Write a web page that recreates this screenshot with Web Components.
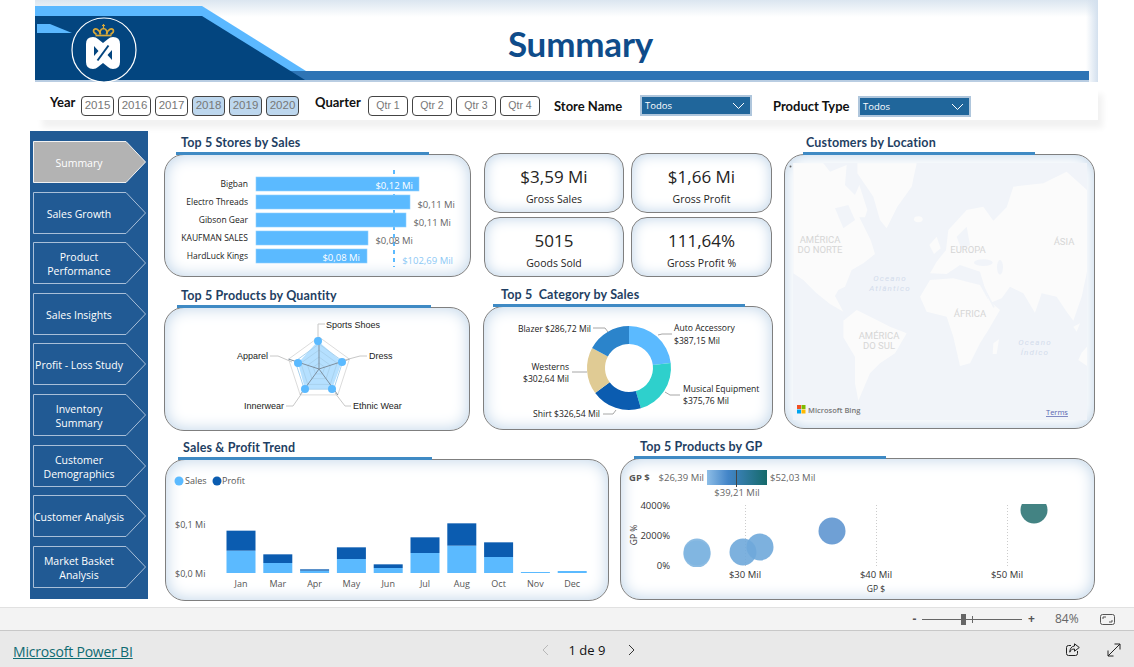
<!DOCTYPE html>
<html lang="en">
<head>
<meta charset="utf-8">
<title>Summary</title>
<style>
  html, body { margin: 0; padding: 0; background: #fff; }
  body { width: 1134px; height: 667px; overflow: hidden; font-family: "Open Sans", "Liberation Sans", sans-serif; }
</style>
</head>
<body>
<report-page></report-page>
<script>
const TITLE_FONT = `Lato, "Open Sans", sans-serif`;
const UI_FONT = `"Open Sans", "Liberation Sans", sans-serif`;
const ARIAL = `"Liberation Sans", Arial, sans-serif`;

class ReportHeader extends HTMLElement {
  constructor() {
    super();
    this.attachShadow({ mode: 'open' });
  }
  connectedCallback() {
    this.shadowRoot.innerHTML = `
      <style>
        :host { display: flex; position: relative; width: 1063px; height: 82px; margin-left: 35px; align-items: center; justify-content: center;
          box-sizing: border-box; padding: 4px 0 0 28px;
          background: linear-gradient(to bottom, #dbe6f0 0, #fff 17px); overflow: hidden; }
        .edge { position: absolute; top: 0; right: 0; bottom: 0; width: 12px; background: linear-gradient(to left, #d3e0ee, rgba(255,255,255,0)); }
        svg { position: absolute; left: 0; top: 0; }
        h1 { position: relative; margin: 0; font: 700 35px/40px ${TITLE_FONT}; color: #0f4c8a; letter-spacing: -.2px; }
      </style>
      <div class="edge"></div>
      <svg width="1063" height="82" viewBox="35 0 1063 82">
        <rect x="35" y="80" width="1054" height="2" fill="#b9cde2"/>
        <polygon points="35,6 202,6 306,71 320,80 35,80" fill="#5bb8ff"/>
        <rect x="290" y="71" width="799" height="9" fill="#2e74b5"/>
        <polygon points="35,16 202,16 305,80 35,80" fill="#03457f"/>
        <polygon points="37,24 50,24 72,33 37,33" fill="#5bb8ff"/>
        <circle cx="104" cy="50" r="32" fill="#03457f" stroke="#fff" stroke-width="1.2"/>
        <g fill="none" stroke="#d9a93a" stroke-width="1.7">
          <path d="M95.500 35.500h16"/>
          <path d="M96.500 34.500c-1-1.200-3-1.600-3-3.500 0-1.800 2-2.600 3.600-1.800 1.500.8 2.900 2.600 3.400 5"/>
          <path d="M110.500 34.500c1-1.200 3-1.600 3-3.500 0-1.800-2-2.600-3.600-1.800-1.500.8-2.900 2.600-3.400 5"/>
          <path d="M100.500 34.500c-.8-2-.8-5.500 3-6 3.800.5 3.800 4 3 6"/>
          <path d="M103.500 28v-4M102 25.500h3" stroke-width="1.200"/>
        </g>
        <path d="M93 37q3 0 5 2l5 4 5-4q2-2 5-2 7 0 7 7v18q0 7-7 7-3 0-5-2l-5-4-5 4q-2 2-5 2-7 0-7-7V44q0-7 7-7z" fill="#fff"/>
        <path d="M94 46l4.500 5L94 56zM112 60l-4.500-5 4.500-5z" fill="#03457f"/>
        <path d="M97.500 60.500L108.500 45.500" stroke="#03457f" stroke-width="2" fill="none"/>
      </svg>
      <h1><slot></slot></h1>
    `;
  }
}

class SlicerButton extends HTMLElement {
  constructor() {
    super();
    this.attachShadow({ mode: 'open' });
  }
  connectedCallback() {
    const on = this.hasAttribute('selected');
    this.shadowRoot.innerHTML = `
      <style>
        :host { display: flex; box-sizing: border-box; height: 20px; width: var(--w, 33px); align-items: center; justify-content: center;
          border: 1px solid #444; border-radius: 4px; font: var(--fs, 11.500px)/1 ${ARIAL}; color: #777; background: ${on ? '#bdd7ee' : '#fff'}; }
      </style>
      <slot></slot>
    `;
  }
}

class SlicerDropdown extends HTMLElement {
  constructor() {
    super();
    this.attachShadow({ mode: 'open' });
  }
  connectedCallback() {
    this.shadowRoot.innerHTML = `
      <style>
        :host { display: flex; box-sizing: border-box; height: 21px; align-items: center; justify-content: space-between; padding: 1px 5px 0 3px;
          background: #20669b; border: 2px solid #afc6dc; color: #fff; font: 9.500px/1 ${UI_FONT}; }
        svg { display: block; }
      </style>
      <slot></slot>
      <svg width="13" height="8" viewBox="0 0 13 8"><path d="M1 1l5.500 5.500L12 1" fill="none" stroke="#fff" stroke-width="1"/></svg>
    `;
  }
}

class SlicerBar extends HTMLElement {
  constructor() {
    super();
    this.attachShadow({ mode: 'open' });
  }
  connectedCallback() {
    const years = [2015, 2016, 2017, 2018, 2019, 2020];
    const selected = [2018, 2019, 2020];
    const qtrs = ['Qtr 1', 'Qtr 2', 'Qtr 3', 'Qtr 4'];
    this.shadowRoot.innerHTML = `
      <style>
        :host { display: flex; box-sizing: border-box; width: 1063px; height: 36px; margin: 2px 0 11px 35px; padding: 11px 0 4px 15px;
          background: #fff; box-shadow: 6px 9px 6px -1px #f2f2f2; align-items: center; }
        .lbl { font: 700 13px/16px ${TITLE_FONT}; color: #111; white-space: nowrap; }
        .up { margin-bottom: 7px; }
        .group { display: flex; gap: 4px; }
      </style>
      <span class="lbl up" style="width:31px">Year</span>
      <div class="group">
        ${years.map(y => `<slicer-button ${selected.includes(y) ? 'selected' : ''}>${y}</slicer-button>`).join('')}
      </div>
      <span class="lbl up" style="width:53px;margin-left:16px">Quarter</span>
      <div class="group" style="--w:40px;--fs:10.500px">
        ${qtrs.map(q => `<slicer-button>${q}</slicer-button>`).join('')}
      </div>
      <span class="lbl" style="width:86px;margin-left:14px">Store Name</span>
      <slicer-dropdown style="width:112px">Todos</slicer-dropdown>
      <span class="lbl" style="width:85px;margin-left:21px">Product Type</span>
      <slicer-dropdown style="width:113px;margin-top:1px">Todos</slicer-dropdown>
    `;
  }
}

class NavArrow extends HTMLElement {
  constructor() {
    super();
    this.attachShadow({ mode: 'open' });
  }
  connectedCallback() {
    const on = this.hasAttribute('active');
    this.shadowRoot.innerHTML = `
      <style>
        :host { display: flex; position: relative; box-sizing: border-box; width: 113px; height: 42px; padding: 2px 21px 0 0; align-items: center; justify-content: center;
          color: #fff; font: 10.500px/14px ${UI_FONT}; text-align: center; white-space: nowrap; }
        svg { position: absolute; left: 0; top: 0; }
        span { position: relative; }
      </style>
      <svg width="113" height="42" viewBox="0 0 113 42">
        <polygon points="0.500,0.500 93,0.500 112.500,21 93,41.500 0.500,41.500" fill="${on ? '#b3b3b3' : 'none'}" stroke="${on ? '#f2f2f2' : '#a9bfd8'}"/>
      </svg>
      <span><slot></slot></span>
    `;
  }
}

class SideNav extends HTMLElement {
  constructor() {
    super();
    this.attachShadow({ mode: 'open' });
  }
  connectedCallback() {
    const items = ['Summary', 'Sales Growth', 'Product<br>Performance', 'Sales Insights', 'Profit - Loss Study',
      'Inventory<br>Summary', 'Customer<br>Demographics', 'Customer Analysis', 'Market Basket<br>Analysis'];
    this.shadowRoot.innerHTML = `
      <style>
        :host { display: flex; flex-direction: column; box-sizing: border-box; width: 118px; height: 468px; margin-left: 30px; padding: 10px 0 0 3px; gap: 8.620px; background: #215a94; flex: none; }
      </style>
      ${items.map((t, i) => `<nav-arrow ${i === 0 ? 'active' : ''}>${t}</nav-arrow>`).join('')}
    `;
  }
}

class ChartPanel extends HTMLElement {
  constructor() {
    super();
    this.attachShadow({ mode: 'open' });
  }
  connectedCallback() {
    this.shadowRoot.innerHTML = `
      <style>
        :host { display: block; width: var(--w); flex: none; }
        .head { position: relative; z-index: 1; box-sizing: border-box; height: 21px; margin: 0 0 -1px var(--rule-x); width: var(--rule-w); padding-left: var(--title-x);
          border-bottom: 3px solid #3f8ac4; font: 700 12.500px/17px ${TITLE_FONT}; color: #1f3f63; letter-spacing: .15px; white-space: pre; }
        .card { box-sizing: border-box; height: var(--h); border: 1px solid #7f7f7f; border-radius: 20px; background: #fff; box-shadow: inset 0 0 16px #bcd2e7; overflow: hidden; }
      </style>
      <div class="head">${this.getAttribute('heading')}</div>
      <div class="card"><slot></slot></div>
    `;
  }
}

class KpiCard extends HTMLElement {
  constructor() {
    super();
    this.attachShadow({ mode: 'open' });
  }
  connectedCallback() {
    this.shadowRoot.innerHTML = `
      <style>
        :host { display: flex; flex-direction: column; align-items: center; box-sizing: border-box; padding-top: 11px; gap: 3px;
          border: 1px solid #7f7f7f; border-radius: 16px; background: #fff; box-shadow: inset 0 0 14px #bcd2e7; color: #252423; }
        .v { font: 17px/24px ${UI_FONT}; }
        .l { font: 10.500px/14px ${UI_FONT}; }
      </style>
      <div class="v">${this.getAttribute('value')}</div>
      <div class="l"><slot></slot></div>
    `;
  }
}

class StoresChart extends HTMLElement {
  constructor() {
    super();
    this.attachShadow({ mode: 'open' });
  }
  connectedCallback() {
    const rows = [
      ['Bigban', 419, '$0,12 Mi', 413, 189, true],
      ['Electro Threads', 410, '$0,11 Mi', 455, 208, false],
      ['Gibson Gear', 406, '$0,11 Mi', 451, 226, false],
      ['KAUFMAN SALES', 368, '$0,08 Mi', 413, 244, false],
      ['HardLuck Kings', 367, '$0,08 Mi', 360, 261, true]
    ];
    this.shadowRoot.innerHTML = `
      <style>
        :host { display: block; height: 100%; }
        svg { display: block; font: 9.500px ${UI_FONT}; }
      </style>
      <svg width="305" height="121" viewBox="165 155 305 121">
        <line x1="394" y1="170" x2="394" y2="267" stroke="#5bbaff" stroke-width="2" stroke-dasharray="4 4"/>
        ${rows.map((r, i) => {
          const y = 177 + i * 18;
          return `
            <text x="248" y="${y + 10}" text-anchor="end" font-size="8.500" fill="#222">${r[0]}</text>
            <rect x="256" y="${y}" width="${r[1] - 256}" height="14" fill="#5bbaff" stroke="#8fd0ff" stroke-width=".6"/>
            <text x="${r[3]}" y="${r[4]}" text-anchor="end" font-size="9.500" fill="${r[5] ? '#fff' : '#666'}">${r[2]}</text>`;
        }).join('')}
        <text x="453" y="264" text-anchor="end" font-size="9.500" fill="#8cc8f5">$102,69 Mil</text>
      </svg>
    `;
  }
}

class RadarChart extends HTMLElement {
  constructor() {
    super();
    this.attachShadow({ mode: 'open' });
  }
  connectedCallback() {
    const cx = 319, cy = 369;
    const ring = r => [0, 1, 2, 3, 4].map(i => {
      const a = -Math.PI / 2 + i * 2 * Math.PI / 5;
      return `${(cx + r * Math.cos(a)).toFixed(1)},${(cy + r * Math.sin(a)).toFixed(1)}`;
    });
    const outer = ring(32);
    const data = [[318, 341], [342, 362], [332, 389], [305, 389], [298, 363]];
    this.shadowRoot.innerHTML = `
      <style>
        :host { display: block; height: 100%; }
        svg { display: block; font: 9px ${ARIAL}; }
      </style>
      <svg width="304" height="122" viewBox="165 308 304 122">
        <polygon points="${data.map(p => p.join(',')).join(' ')}" fill="#5bbaff" fill-opacity=".45"/>
        ${[32, 25, 19, 12, 6].map((r, i) => `<polygon points="${ring(r).join(' ')}" fill="none" stroke="${i ? '#a9d2ee' : '#dcdcdc'}" stroke-width="1"/>`).join('')}
        ${outer.map(p => `<path d="M${cx} ${cy}L${p}" stroke="#7e8f9e" stroke-width="1"/>`).join('')}
        ${data.map(p => `<circle cx="${p[0]}" cy="${p[1]}" r="4" fill="#5bbaff"/>`).join('')}
        <g fill="none" stroke="#c8c8c8" stroke-width="1">
          <path d="M318 337V324H325"/>
          <path d="M345 360L360 356H367"/>
          <path d="M335 393L345 406H351"/>
          <path d="M302 393L293 406H286"/>
          <path d="M292 362L278 356H270"/>
        </g>
        <g fill="#222">
          <text x="326" y="328">Sports Shoes</text>
          <text x="369" y="359">Dress</text>
          <text x="353" y="409">Ethnic Wear</text>
          <text x="284" y="409" text-anchor="end">Innerwear</text>
          <text x="268" y="359" text-anchor="end">Apparel</text>
        </g>
      </svg>
    `;
  }
}

class DonutChart extends HTMLElement {
  constructor() {
    super();
    this.attachShadow({ mode: 'open' });
  }
  connectedCallback() {
    const cx = 629, cy = 368, R = 42, r = 24;
    const slices = [[387.15, '#5bbaff'], [375.76, '#2ed0cc'], [326.54, '#0b5cb0'], [302.64, '#e0cb94'], [286.72, '#2b84cb']];
    const total = slices.reduce((s, x) => s + x[0], 0);
    const pt = (rad, deg) => {
      const a = (deg - 90) * Math.PI / 180;
      return `${(cx + rad * Math.cos(a)).toFixed(2)} ${(cy + rad * Math.sin(a)).toFixed(2)}`;
    };
    let at = 0;
    const arcs = slices.map(([v, c]) => {
      const from = at, to = at + v / total * 360;
      at = to;
      return `<path d="M${pt(R, from)}A${R} ${R} 0 0 1 ${pt(R, to)}L${pt(r, to)}A${r} ${r} 0 0 0 ${pt(r, from)}Z" fill="${c}"/>`;
    }).join('');
    this.shadowRoot.innerHTML = `
      <style>
        :host { display: block; height: 100%; }
        svg { display: block; font: 8.600px ${UI_FONT}; }
      </style>
      <svg width="288" height="122" viewBox="484 307 288 122">
        ${arcs}
        <g fill="none" stroke="#a6a6a6" stroke-width="1">
          <path d="M658 335L662 334H672"/>
          <path d="M593 328H605L608 332"/>
          <path d="M572 372H587"/>
          <path d="M665 392L670 395H680"/>
          <path d="M603 414H613L616 410"/>
        </g>
        <g fill="#222">
          <text x="674" y="331">Auto Accessory</text>
          <text x="674" y="344">$387,15 Mil</text>
          <text x="683" y="392">Musical Equipment</text>
          <text x="683" y="404">$375,76 Mil</text>
          <text x="591" y="332" text-anchor="end">Blazer $286,72 Mil</text>
          <text x="569" y="370" text-anchor="end">Westerns</text>
          <text x="569" y="382" text-anchor="end">$302,64 Mil</text>
          <text x="600" y="417" text-anchor="end">Shirt $326,54 Mil</text>
        </g>
      </svg>
    `;
  }
}

class WorldMap extends HTMLElement {
  constructor() {
    super();
    this.attachShadow({ mode: 'open' });
  }
  connectedCallback() {
    const sea = '#f1f4f9';
    // zoomed-in map coordinates, scaled down by the group below
    const land = [
      '40,100 130,100 150,125 200,105 195,165 225,195 238,165 262,240 255,262 238,262 272,330 285,372 250,400 215,420 195,470 175,480 165,498 190,545 150,522 110,490 70,450 40,430',
      '232,100 410,100 395,170 352,230 320,295 300,270 280,200 232,130',
      '190,572 230,540 290,570 330,590 380,610 345,670 300,700 270,730 235,812 225,760 225,680 190,622',
      '420,500 450,450 520,445 600,465 625,510 660,540 625,600 600,640 570,700 540,708 520,620 500,560 440,545',
      '640,640 657,628 650,672 638,672',
      '450,430 470,395 498,360 505,300 560,240 610,230 640,272 680,232 700,170 790,160 860,125 921,180 921,425 905,500 880,572 860,545 830,500 785,490 765,548 730,490 690,470 665,505 628,520 600,425 540,405 500,432',
      '448,345 470,320 482,355 462,372',
      '880,590 900,580 890,605',
      '905,668 921,650 921,708 895,690'
    ];
    const txt = (s, x, y) => `<text x="${x}" y="${y}">${s}</text>`;
    this.shadowRoot.innerHTML = `
      <style>
        :host { display: block; height: 100%; }
        svg { display: block; }
        .place { font: 9.500px Roboto, sans-serif; fill: #d6d6d6; text-anchor: middle; }
        .sea { font: italic 8px Roboto, sans-serif; fill: #d3dcec; text-anchor: middle; letter-spacing: 1.200px; }
      </style>
      <svg width="309" height="273" viewBox="785 155 309 273">
        <rect x="793" y="163" width="294" height="257" fill="${sea}"/>
        <g transform="translate(780 130) scale(.33333)">
          <g fill="#fbfbfb">
            ${land.map(p => `<polygon points="${p}"/>`).join('')}
            <ellipse cx="415" cy="268" rx="13" ry="9"/>
          </g>
          <g fill="${sea}">
            <polygon points="165,235 205,225 225,270 190,295"/>
            <polygon points="530,320 560,290 570,345 545,360"/>
            <ellipse cx="610" cy="398" rx="28" ry="10"/>
            <ellipse cx="660" cy="412" rx="9" ry="22"/>
          </g>
          <path d="M602 455L642 532" stroke="${sea}" stroke-width="5"/>
        </g>
        <circle cx="790.500" cy="159.500" r="1" fill="#666"/>
        <circle cx="790.500" cy="166.500" r="1" fill="#666"/>
        <g class="place">
          ${txt('AMÉRICA', 820, 243)}${txt('DO NORTE', 820, 253)}${txt('EUROPA', 968, 253)}${txt('ÁSIA', 1064, 245)}
          ${txt('ÁFRICA', 970, 317)}${txt('AMÉRICA', 879, 339)}${txt('DO SUL', 879, 349)}
        </g>
        <g class="sea">
          ${txt('Oceano', 890, 281)}${txt('Atlântico', 890, 291)}${txt('Oceano', 1035, 345)}${txt('Índico', 1035, 355)}
        </g>
        <rect x="797" y="405" width="4" height="4" fill="#f25022"/>
        <rect x="801.500" y="405" width="4" height="4" fill="#7fba00"/>
        <rect x="797" y="409.500" width="4" height="4" fill="#00a4ef"/>
        <rect x="801.500" y="409.500" width="4" height="4" fill="#ffb900"/>
        <text x="808" y="412.500" font-family="${UI_FONT.replace(/"/g, "'")}" font-size="7.500" font-weight="600" fill="#777">Microsoft Bing</text>
        <text x="1046" y="415" font-family="${UI_FONT.replace(/"/g, "'")}" font-size="7.500" fill="#5a66b0" text-decoration="underline">Terms</text>
      </svg>
    `;
  }
}

class TrendChart extends HTMLElement {
  constructor() {
    super();
    this.attachShadow({ mode: 'open' });
  }
  connectedCallback() {
    const months = [['Jan', 347, 287], ['Mar', 384, 358], ['Apr', 407, 403], ['May', 372, 337], ['Jun', 399, 388],
      ['Jul', 354, 307], ['Aug', 332, 265], ['Oct', 366, 322], ['Nov', 411, 411], ['Dec', 408, 408]];
    const base = 573;
    const toY = v => 435 + v / 3;
    this.shadowRoot.innerHTML = `
      <style>
        :host { display: block; height: 100%; }
        svg { display: block; font: 9px ${UI_FONT}; fill: #555; }
      </style>
      <svg width="442" height="140" viewBox="166 460 442 140">
        <circle cx="179" cy="481" r="4.500" fill="#5bbaff"/>
        <text x="185" y="484">Sales</text>
        <circle cx="217" cy="481" r="4.500" fill="#0b5cb0"/>
        <text x="222" y="484">Profit</text>
        <text x="175" y="528">$0,1 Mi</text>
        <text x="175" y="577">$0,0 Mi</text>
        ${months.map(([m, s, p], i) => {
          const x = 241 + i * 36.8;
          return `
            <rect x="${x - 14.500}" y="${toY(s)}" width="29" height="${base - toY(s)}" fill="#5bbaff"/>
            <rect x="${x - 14.500}" y="${toY(p)}" width="29" height="${toY(s) - toY(p)}" fill="#0b5cb0"/>
            <text x="${x}" y="587" text-anchor="middle">${m}</text>`;
        }).join('')}
      </svg>
    `;
  }
}

class BubbleChart extends HTMLElement {
  constructor() {
    super();
    this.attachShadow({ mode: 'open' });
  }
  connectedCallback() {
    const bubbles = [[697, 552, '#7fb5e0'], [697, 554, '#7fb5e0'], [743, 552, '#6fa9da'], [760, 547, '#6fa9da'], [832, 531, '#5f96d0'], [1034, 510, '#2f7575']];
    this.shadowRoot.innerHTML = `
      <style>
        :host { display: block; height: 100%; }
        svg { display: block; font: 9.500px ${UI_FONT}; fill: #333; }
      </style>
      <svg width="473" height="140" viewBox="621 459 473 140">
        <defs>
          <linearGradient id="gp">
            <stop offset="0" stop-color="#8dbde6"/><stop offset=".35" stop-color="#4385c8"/><stop offset="1" stop-color="#156a6a"/>
          </linearGradient>
          <clipPath id="plot"><rect x="680" y="504" width="400" height="63"/></clipPath>
        </defs>
        <text x="629" y="481" font-weight="700" fill="#555">GP $</text>
        <text x="704" y="481" text-anchor="end" fill="#666">$26,39 Mil</text>
        <rect x="707" y="470" width="60" height="15" fill="url(#gp)"/>
        <line x1="736.500" y1="470" x2="736.500" y2="487" stroke="#444"/>
        <text x="770" y="481" fill="#666">$52,03 Mil</text>
        <text x="737" y="496" text-anchor="middle" fill="#666">$39,21 Mil</text>
        ${[745, 876, 1007].map(x => `<line x1="${x}.500" y1="505" x2="${x}.500" y2="566" stroke="#ccc" stroke-dasharray="1 2"/>`).join('')}
        <g clip-path="url(#plot)">
          ${bubbles.map(b => `<circle cx="${b[0]}" cy="${b[1]}" r="13.500" fill="${b[2]}" fill-opacity=".9"/>`).join('')}
        </g>
        <text x="670" y="509" text-anchor="end">4000%</text>
        <text x="670" y="539" text-anchor="end">2000%</text>
        <text x="670" y="569" text-anchor="end">0%</text>
        <text transform="translate(637 535) rotate(-90)" text-anchor="middle" font-size="8.500">GP %</text>
        <text x="745" y="578" text-anchor="middle">$30 Mil</text>
        <text x="876" y="578" text-anchor="middle">$40 Mil</text>
        <text x="1007" y="578" text-anchor="middle">$50 Mil</text>
        <text x="876" y="592" text-anchor="middle" font-size="8.500">GP $</text>
      </svg>
    `;
  }
}

class ZoomBar extends HTMLElement {
  constructor() {
    super();
    this.attachShadow({ mode: 'open' });
  }
  connectedCallback() {
    this.shadowRoot.innerHTML = `
      <style>
        :host { display: flex; box-sizing: border-box; height: 24px; padding-right: 19px; align-items: center; justify-content: flex-end;
          background: #f3f3f3; border-top: 1px solid #e1e1e1; border-bottom: 1px solid #c8c8c8; font: 12px/1 ${UI_FONT}; color: #666; }
        .sign { width: 7px; text-align: center; font-weight: 700; color: #555; }
        .track { position: relative; width: 100px; height: 1px; background: #666; margin: 0 6px 0 4px; }
        .thumb { position: absolute; left: 39px; top: -5px; width: 5px; height: 11px; background: #666; }
        .tick { position: absolute; left: 50px; top: -3px; width: 1px; height: 7px; background: #666; }
        .pct { width: 24px; margin-left: 20px; }
        svg { display: block; margin-left: 21px; }
      </style>
      <span class="sign">-</span>
      <div class="track"><div class="thumb"></div><div class="tick"></div></div>
      <span class="sign">+</span>
      <span class="pct">84%</span>
      <svg width="15" height="11" viewBox="0 0 15 11" fill="none" stroke="#555">
        <rect x=".5" y=".5" width="14" height="10" rx="2"/>
        <path d="M3 5V3h3M12 6v2H9"/>
      </svg>
    `;
  }
}

class ReportFooter extends HTMLElement {
  constructor() {
    super();
    this.attachShadow({ mode: 'open' });
  }
  connectedCallback() {
    this.shadowRoot.innerHTML = `
      <style>
        :host { display: flex; box-sizing: border-box; height: 36px; padding: 2px 0 0 13px; align-items: center; background: #e9e9e9; font: 14px/1 ${UI_FONT}; color: #111; }
        .brand { width: 120px; margin-top: 3px; color: #0e6b72; text-decoration: underline; white-space: nowrap; letter-spacing: -.2px; }
        .pager { display: flex; align-items: center; margin-left: 409px; }
        .num { width: 60px; text-align: center; font-size: 13px; font-weight: 500; }
        .icons { display: flex; gap: 27px; margin-left: auto; padding-right: 13px; }
        svg { display: block; }
      </style>
      <span class="brand">Microsoft Power BI</span>
      <div class="pager">
        <svg width="7" height="12" viewBox="0 0 7 12"><path d="M6 1L1 6l5 5" fill="none" stroke="#b8b8b8"/></svg>
        <span class="num" style="margin:0 11px 0 8px">1 de 9</span>
        <svg width="7" height="12" viewBox="0 0 7 12"><path d="M1 1l5 5-5 5" fill="none" stroke="#333"/></svg>
      </div>
      <div class="icons">
        <svg width="14" height="14" viewBox="0 0 14 14" fill="none" stroke="#222">
          <path d="M5 2.500H2.500a2 2 0 0 0-2 2v6a2 2 0 0 0 2 2h7a2 2 0 0 0 2-2V8"/>
          <path d="M8.500.800L13.300 4.500 8.500 8.200V6C6 6 4.500 7 3.800 9.200 3.800 5.800 5.500 3.200 8.500 3z"/>
        </svg>
        <svg width="14" height="14" viewBox="0 0 14 14" fill="none" stroke="#222">
          <path d="M1 13L13 1M7.500 1H13v5.500M1 7.500V13h5.500"/>
        </svg>
      </div>
    `;
  }
}

class ReportPage extends HTMLElement {
  constructor() {
    super();
    this.attachShadow({ mode: 'open' });
  }
  connectedCallback() {
    this.shadowRoot.innerHTML = `
      <style>
        :host { display: flex; flex-direction: column; width: 1134px; height: 667px; }
        .body { display: flex; height: 476px; flex: none; }
        .main { display: flex; flex-direction: column; margin-left: 16px; padding-top: 2px; }
        .top { display: flex; height: 305px; flex: none; }
        .col { display: flex; flex-direction: column; }
        .kpis { display: grid; grid-template-columns: 140px 141px; grid-auto-rows: 60px; column-gap: 7px; row-gap: 4px; margin-top: 20px; margin-left: 1px; }
        .bottom { display: flex; }
      </style>
      <report-header>Summary</report-header>
      <slicer-bar></slicer-bar>
      <div class="body">
        <side-nav></side-nav>
        <div class="main">
          <div class="top">
            <div class="col" style="padding-top:1px;gap:10px;width:319px">
              <chart-panel heading="Top 5 Stores by Sales" style="--w:307px;--h:123px;--rule-x:12px;--rule-w:253px;--title-x:5px"><stores-chart></stores-chart></chart-panel>
              <chart-panel heading="Top 5 Products by Quantity" style="--w:306px;--h:124px;--rule-x:13px;--rule-w:254px;--title-x:4px"><radar-chart></radar-chart></chart-panel>
            </div>
            <div class="col" style="gap:9px;width:301px">
              <div class="kpis">
                <kpi-card value="$3,59 Mi">Gross Sales</kpi-card>
                <kpi-card value="$1,66 Mi">Gross Profit</kpi-card>
                <kpi-card value="5015">Goods Sold</kpi-card>
                <kpi-card value="111,64%">Gross Profit %</kpi-card>
              </div>
              <chart-panel heading="Top 5  Category by Sales" style="--w:290px;--h:124px;--rule-x:10px;--rule-w:252px;--title-x:8px"><donut-chart></donut-chart></chart-panel>
            </div>
            <div class="col" style="padding-top:1px">
              <chart-panel heading="Customers by Location" style="--w:311px;--h:275px;--rule-x:19px;--rule-w:232px;--title-x:3px"><world-map></world-map></chart-panel>
            </div>
          </div>
          <div class="bottom">
            <chart-panel heading="Sales &amp; Profit Trend" style="--w:444px;--h:142px;--rule-x:13px;--rule-w:254px;--title-x:5px;margin:1px 0 0 1px"><trend-chart></trend-chart></chart-panel>
            <chart-panel heading="Top 5 Products by GP" style="--w:475px;--h:142px;--rule-x:14px;--rule-w:252px;--title-x:6px;margin-left:11px"><bubble-chart></bubble-chart></chart-panel>
          </div>
        </div>
      </div>
      <zoom-bar></zoom-bar>
      <report-footer></report-footer>
    `;
  }
}

customElements.define('report-header', ReportHeader);
customElements.define('slicer-button', SlicerButton);
customElements.define('slicer-dropdown', SlicerDropdown);
customElements.define('slicer-bar', SlicerBar);
customElements.define('nav-arrow', NavArrow);
customElements.define('side-nav', SideNav);
customElements.define('chart-panel', ChartPanel);
customElements.define('kpi-card', KpiCard);
customElements.define('stores-chart', StoresChart);
customElements.define('radar-chart', RadarChart);
customElements.define('donut-chart', DonutChart);
customElements.define('world-map', WorldMap);
customElements.define('trend-chart', TrendChart);
customElements.define('bubble-chart', BubbleChart);
customElements.define('zoom-bar', ZoomBar);
customElements.define('report-footer', ReportFooter);
customElements.define('report-page', ReportPage);
</script>
</body>
</html>
